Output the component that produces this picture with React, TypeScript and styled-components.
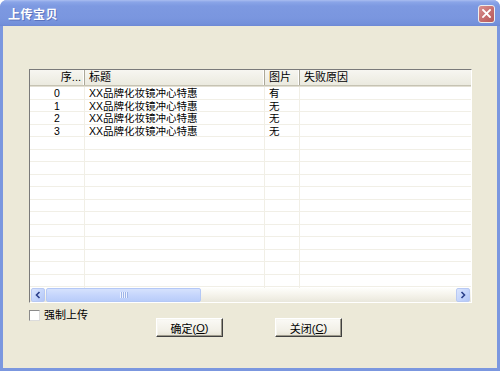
import styled, { createGlobalStyle } from 'styled-components';

const GlobalStyle = createGlobalStyle`
  html, body {
    margin: 0;
    padding: 0;
    background: #ffffff;
  }
  body {
    font-family: "Liberation Sans", "Noto Sans CJK SC", sans-serif;
    font-size: 11px;
    color: #000;
  }
`;

const Window = styled.div`
  width: 500px;
  height: 371px;
  box-sizing: border-box;
  display: flex;
  flex-direction: column;
  background: #7b97df;
  border-radius: 7px 7px 0 0;
  padding: 0 3px 3px;
  overflow: hidden;
`;

const TitleBar = styled.div`
  height: 26px;
  margin: 0 -3px;
  padding: 0 5px 0 8px;
  display: flex;
  align-items: center;
  justify-content: space-between;
  background: linear-gradient(
    180deg,
    #a9bdf0 0px,
    #8aa5e8 2px,
    #7d99e1 6px,
    #7a96df 18px,
    #7390da 24px,
    #6d88d4 26px
  );
`;

const Title = styled.span`
  color: #fff;
  font-size: 12px;
  font-weight: bold;
  letter-spacing: 0.5px;
  text-shadow: 1px 1px 0 #5a72bc;
`;

const CloseButton = styled.div`
  width: 15px;
  height: 16px;
  border: 1px solid #eee;
  border-radius: 3px;
  background: linear-gradient(135deg, #d99191 0%, #c46b6b 60%, #b65a5a 100%);
  display: flex;
  align-items: center;
  justify-content: center;
  margin-top: 1px;
`;

const Body = styled.div`
  flex: 1;
  background: #ece9d8;
  padding: 43px 25px 0 26px;
  display: flex;
  flex-direction: column;
`;

const ListView = styled.div`
  height: 234px;
  box-sizing: border-box;
  border-top: 1px solid #7a7a7a;
  border-left: 1px solid #7a7a7a;
  border-right: 1px solid #fff;
  border-bottom: 1px solid #fff;
  background: #fff;
  display: flex;
  flex-direction: column;
`;

const HeaderRow = styled.div`
  height: 16px;
  box-sizing: border-box;
  display: flex;
  background: linear-gradient(180deg, #f7f6f1 0%, #ebeadf 100%);
  border-bottom: 1px solid #c6c3b3;
  box-shadow: 0 1px 0 #e2dfd2;
`;

const HeaderCell = styled.div<{ $w?: number; $right?: boolean }>`
  ${(p) => (p.$w ? `width: ${p.$w}px;` : 'flex: 1;')}
  box-sizing: border-box;
  display: flex;
  align-items: center;
  justify-content: ${(p) => (p.$right ? 'flex-end' : 'flex-start')};
  padding: ${(p) => (p.$right ? '0 3px 0 0' : '0 0 0 4px')};
  border-right: 1px solid #aca899;
  box-shadow: inset -1px 0 0 #fff;
  white-space: nowrap;
  line-height: 15px;
  &:last-child {
    border-right: none;
    box-shadow: none;
  }
`;

const Rows = styled.div`
  flex: 1;
  overflow: hidden;
  margin-top: 1px;
`;

const Row = styled.div`
  height: 12.5px;
  box-sizing: border-box;
  display: flex;
  border-bottom: 1px solid #f1efe6;
`;

const Cell = styled.div<{ $w?: number; $center?: boolean }>`
  ${(p) => (p.$w ? `width: ${p.$w}px;` : 'flex: 1;')}
  box-sizing: border-box;
  border-right: 1px solid #f1efe6;
  padding-left: ${(p) => (p.$center ? '0' : '4px')};
  text-align: ${(p) => (p.$center ? 'center' : 'left')};
  font-size: 10.5px;
  line-height: 12px;
  white-space: nowrap;
  &:last-child {
    border-right: none;
  }
`;

const ScrollBar = styled.div`
  height: 14px;
  display: flex;
  align-items: stretch;
  background: linear-gradient(180deg, #fefefb 0%, #f3f1e8 60%, #e9e7dc 100%);
  padding: 0 1px;
  gap: 1px;
`;

const ScrollButton = styled.div`
  width: 14px;
  box-sizing: border-box;
  border: 1px solid #b8c9f3;
  border-radius: 2px;
  background: linear-gradient(135deg, #dbe5fd 0%, #c2d3fb 60%, #b3c6f6 100%);
  display: flex;
  align-items: center;
  justify-content: center;
`;

const Thumb = styled.div`
  width: 155px;
  box-sizing: border-box;
  border: 1px solid #b4c8f6;
  border-radius: 2px;
  background: linear-gradient(180deg, #d6e2fd 0%, #c6d6fc 50%, #b9cdf9 100%);
  display: flex;
  align-items: center;
  justify-content: center;
`;

const Grip = styled.div`
  display: flex;
  gap: 1px;
  span {
    width: 1px;
    height: 6px;
    background: #eef3ff;
    box-shadow: 1px 0 0 #9fb5e8;
  }
`;

const ScrollSpacer = styled.div`
  flex: 1;
`;

const Footer = styled.div`
  display: flex;
  align-items: flex-start;
  margin-top: 6px;
`;

const CheckField = styled.label`
  width: 127px;
  display: flex;
  align-items: center;
  gap: 4px;
  font-size: 11px;
  line-height: 12px;
`;

const CheckBox = styled.span`
  width: 11px;
  height: 11px;
  box-sizing: border-box;
  border: 1px solid #8a8a8a;
  border-right-color: #dcdcdc;
  border-bottom-color: #dcdcdc;
  background: #fff;
  display: inline-block;
`;

const ButtonRow = styled.div`
  display: flex;
  gap: 52px;
  margin-top: 9px;
`;

const Button = styled.div`
  width: 67px;
  height: 19px;
  box-sizing: border-box;
  border: 1px solid;
  border-color: #fff #404040 #404040 #fff;
  box-shadow: inset -1px -1px 0 #9d9a8c, inset 1px 1px 0 #f7f6f0;
  background: linear-gradient(180deg, #fbfaf6 0%, #f1efe6 70%, #e6e3d5 100%);
  display: flex;
  align-items: center;
  justify-content: center;
  font-size: 11px;
  u {
    text-decoration: underline;
  }
`;

const rows = [
  { no: '0', title: 'XX品牌化妆镜冲心特惠', pic: '有' },
  { no: '1', title: 'XX品牌化妆镜冲心特惠', pic: '无' },
  { no: '2', title: 'XX品牌化妆镜冲心特惠', pic: '无' },
  { no: '3', title: 'XX品牌化妆镜冲心特惠', pic: '无' },
];

const TOTAL_ROWS = 17;

export default function App() {
  const filled = [...rows];
  while (filled.length < TOTAL_ROWS) filled.push({ no: '', title: '', pic: '' });

  return (
    <>
      <GlobalStyle />
      <Window>
        <TitleBar>
          <Title>上传宝贝</Title>
          <CloseButton>
            <svg width="9" height="9" viewBox="0 0 9 9">
              <path d="M1 1 L8 8 M8 1 L1 8" stroke="#fff" strokeWidth="1.8" strokeLinecap="square" />
            </svg>
          </CloseButton>
        </TitleBar>
        <Body>
          <ListView>
            <HeaderRow>
              <HeaderCell $w={55} $right>
                序...
              </HeaderCell>
              <HeaderCell $w={180}>标题</HeaderCell>
              <HeaderCell $w={35}>图片</HeaderCell>
              <HeaderCell>失败原因</HeaderCell>
            </HeaderRow>
            <Rows>
              {filled.map((r, i) => (
                <Row key={i}>
                  <Cell $w={55} $center>
                    {r.no}
                  </Cell>
                  <Cell $w={180}>{r.title}</Cell>
                  <Cell $w={35}>{r.pic}</Cell>
                  <Cell />
                </Row>
              ))}
            </Rows>
            <ScrollBar>
              <ScrollButton>
                <svg width="6" height="8" viewBox="0 0 6 8">
                  <path d="M4.5 1 L1.5 4 L4.5 7" stroke="#2b3f8a" strokeWidth="1.6" fill="none" />
                </svg>
              </ScrollButton>
              <Thumb>
                <Grip>
                  <span />
                  <span />
                  <span />
                  <span />
                </Grip>
              </Thumb>
              <ScrollSpacer />
              <ScrollButton>
                <svg width="6" height="8" viewBox="0 0 6 8">
                  <path d="M1.5 1 L4.5 4 L1.5 7" stroke="#2b3f8a" strokeWidth="1.6" fill="none" />
                </svg>
              </ScrollButton>
            </ScrollBar>
          </ListView>
          <Footer>
            <CheckField>
              <CheckBox />
              强制上传
            </CheckField>
            <ButtonRow>
              <Button>
                确定(<u>O</u>)
              </Button>
              <Button>
                关闭(<u>C</u>)
              </Button>
            </ButtonRow>
          </Footer>
        </Body>
      </Window>
    </>
  );
}
